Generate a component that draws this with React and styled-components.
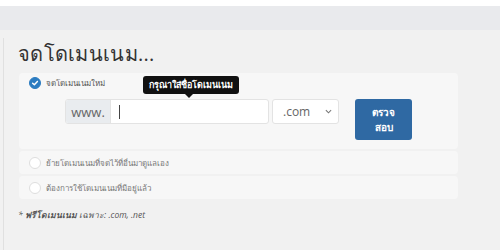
import styled, { createGlobalStyle } from "styled-components";

const GlobalStyle = createGlobalStyle`
    body {
        margin: 0;
        background: #f1f1f1;
        font-family: "Open Sans", "Noto Sans", "DejaVu Sans", sans-serif;
        color: #333;
    }
`;

const TopStrip = styled.div`
    height: 6px;
    background: #ffffff;
`;

const HeaderBar = styled.div`
    height: 24px;
    background: #e9eaed;
`;

const Main = styled.div`
    display: flex;
    min-height: 220px;
`;

const SideEdge = styled.div`
    width: 3px;
    margin-top: 8px;
    border-right: 1px solid #e0e0e0;
`;

const Content = styled.div`
    padding-left: 14px;
    width: 440px;
`;

const Title = styled.h2`
    margin: 11px 0 6px;
    font-size: 20px;
    font-weight: 400;
    line-height: 26px;
    color: #333;
    letter-spacing: 0.3px;
`;

const Options = styled.div`
    display: flex;
    flex-direction: column;
    gap: 2px;
    margin-left: 1px;
`;

const OptionBox = styled.div`
    background: #f7f7f7;
    border-radius: 4px;
    padding: ${p => (p.$open ? "4px 10px 8px" : "6px 10px")};
    height: ${p => (p.$open ? "76px" : "23px")};
    box-sizing: border-box;
`;

const OptionHead = styled.label`
    display: flex;
    align-items: center;
    gap: 5px;
    font-size: 8px;
    color: ${p => (p.$active ? "#555" : "#777")};
    height: 12px;
`;

const Radio = styled.span`
    width: 12px;
    height: 12px;
    border-radius: 50%;
    box-sizing: border-box;
    display: inline-flex;
    align-items: center;
    justify-content: center;
    background: ${p => (p.$checked ? "#2b7cc1" : "#fff")};
    border: 1px solid ${p => (p.$checked ? "#2b7cc1" : "#dedede")};
    flex-shrink: 0;
`;

const FormRow = styled.div`
    position: relative;
    display: flex;
    align-items: flex-start;
    margin: 10px 0 0 36px;
`;

const InputGroup = styled.div`
    display: flex;
    height: 25px;
    width: 204px;
    border: 1px solid #e3e3e3;
    border-radius: 3px;
    box-sizing: border-box;
    overflow: hidden;
    background: #fff;
`;

const Addon = styled.span`
    display: flex;
    align-items: center;
    justify-content: center;
    width: 44px;
    background: #e9ecef;
    border-right: 1px solid #e3e3e3;
    color: #666;
    font-size: 13px;
`;

const DomainInput = styled.div`
    flex: 1;
    position: relative;
    &::before {
        content: "";
        position: absolute;
        left: 8px;
        top: 5px;
        width: 1px;
        height: 14px;
        background: #444;
    }
`;

const Select = styled.div`
    margin-left: 3px;
    width: 67px;
    height: 25px;
    box-sizing: border-box;
    border: 1px solid #e3e3e3;
    border-radius: 3px;
    background: #fff;
    display: flex;
    align-items: center;
    justify-content: space-between;
    padding: 0 6px 0 10px;
    font-size: 12px;
    color: #666;
`;

const CheckButton = styled.button`
    margin-left: 16px;
    width: 57px;
    height: 41px;
    border: none;
    border-radius: 3px;
    background: #2f69a3;
    color: #fff;
    font-family: inherit;
    font-size: 10px;
    font-weight: 700;
    line-height: 15px;
    padding: 4px 10px;
`;

const Tooltip = styled.div`
    position: absolute;
    left: 78px;
    top: -23px;
    background: #111;
    color: #fff;
    font-size: 9px;
    font-weight: 700;
    padding: 0 6px;
    height: 18px;
    display: flex;
    align-items: center;
    border-radius: 3px;
    white-space: nowrap;
    &::after {
        content: "";
        position: absolute;
        left: 42px;
        bottom: -4px;
        border-left: 4px solid transparent;
        border-right: 4px solid transparent;
        border-top: 4px solid #111;
    }
`;

const Note = styled.p`
    margin: 9px 0 0;
    font-size: 8.5px;
    font-style: italic;
    color: #555;
    b {
        font-weight: 700;
    }
`;

function Check() {
    return (
        <svg width="8" height="8" viewBox="0 0 10 10">
            <path d="M2 5.2 L4.2 7.2 L8 3" fill="none" stroke="#fff" strokeWidth="1.8" strokeLinecap="round" strokeLinejoin="round" />
        </svg>
    );
}

function Chevron() {
    return (
        <svg width="7" height="5" viewBox="0 0 8 5">
            <path d="M1 1 L4 4 L7 1" fill="none" stroke="#777" strokeWidth="1.2" />
        </svg>
    );
}

export default function App() {
    return (
        <>
            <GlobalStyle />
            <TopStrip />
            <HeaderBar />
            <Main>
                <SideEdge />
                <Content>
                    <Title>จดโดเมนเนม...</Title>
                    <Options>
                        <OptionBox $open>
                            <OptionHead $active>
                                <Radio $checked><Check /></Radio>
                                จดโดเมนเนมใหม่
                            </OptionHead>
                            <FormRow>
                                <Tooltip>กรุณาใส่ชื่อโดเมนเนม</Tooltip>
                                <InputGroup>
                                    <Addon>www.</Addon>
                                    <DomainInput />
                                </InputGroup>
                                <Select>.com <Chevron /></Select>
                                <CheckButton>ตรวจ สอบ</CheckButton>
                            </FormRow>
                        </OptionBox>
                        <OptionBox>
                            <OptionHead>
                                <Radio />
                                ย้ายโดเมนเนมที่จดไว้ที่อื่นมาดูแลเอง
                            </OptionHead>
                        </OptionBox>
                        <OptionBox>
                            <OptionHead>
                                <Radio />
                                ต้องการใช้โดเมนเนมที่มีอยู่แล้ว
                            </OptionHead>
                        </OptionBox>
                    </Options>
                    <Note>* <b>ฟรีโดเมนเนม</b> เฉพาะ: .com, .net</Note>
                </Content>
            </Main>
        </>
    );
}
